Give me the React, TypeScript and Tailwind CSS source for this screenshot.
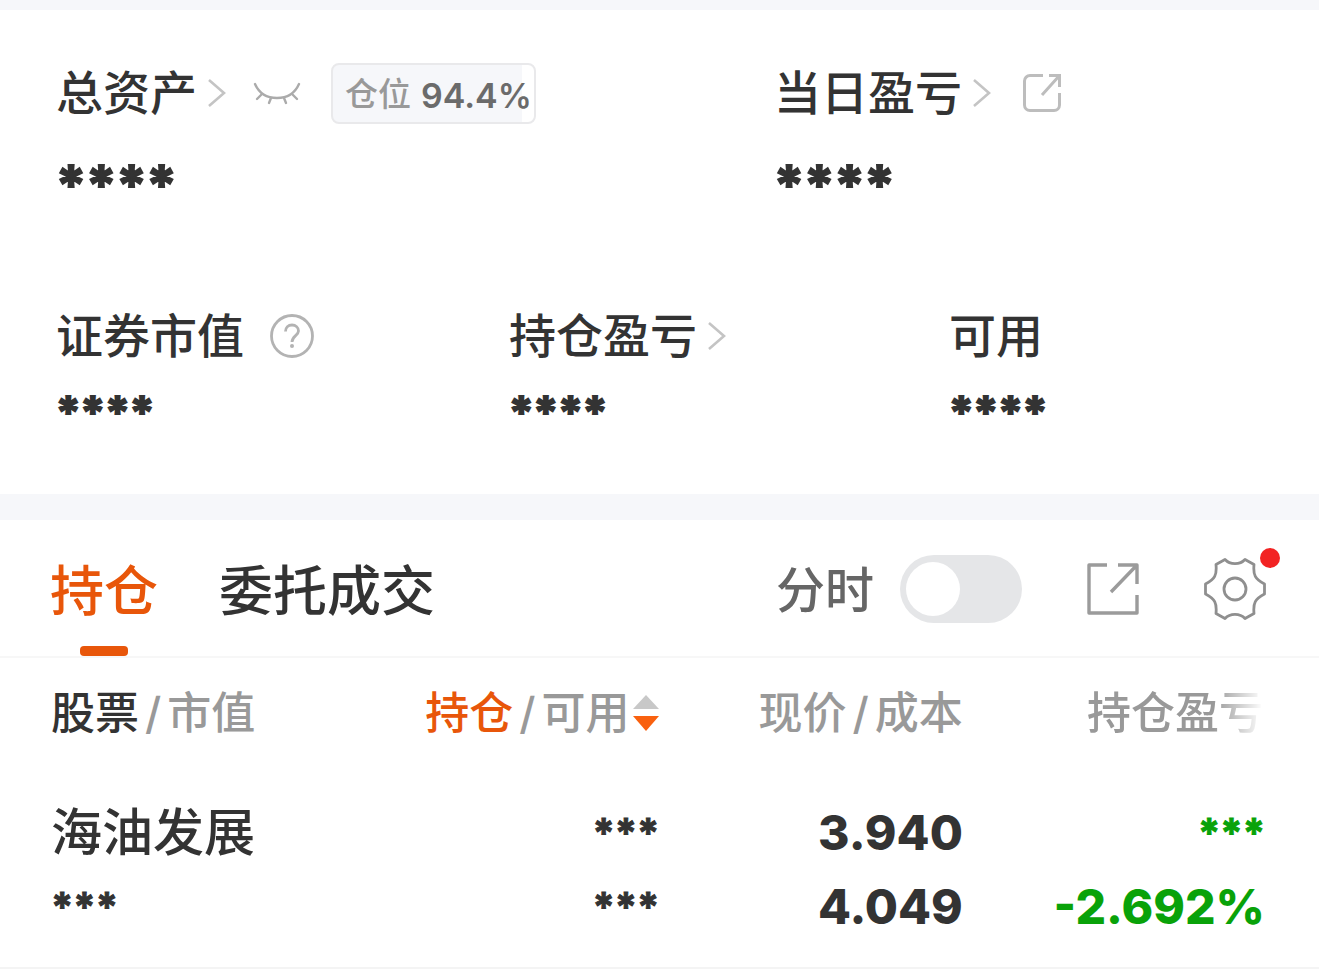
import type { ReactNode } from "react";

const holdings = [
  {
    name: "海油发展",
    marketValue: "***",
    position: "***",
    available: "***",
    price: "3.940",
    cost: "4.049",
    profit: "***",
    profitRate: "-2.692%",
  },
];

function Chevron() {
  return (
    <svg viewBox="0 0 20 32" className="h-8 w-5 shrink-0" fill="none" stroke="#c4c4c4" strokeWidth="2.6">
      <path d="M2 3l15 13L2 29" />
    </svg>
  );
}

function ClosedEye() {
  return (
    <svg viewBox="0 0 48 24" className="h-6 w-12" fill="none" stroke="#ababab" strokeWidth="2.4" strokeLinecap="round">
      <path d="M2 3c4 9 12 14 22 14s18-5 22-14" />
      <path d="M9 13l-5 5M18 17l-2 5M31 17l2 5M39 13l5 5" />
    </svg>
  );
}

function ShareRounded() {
  return (
    <svg viewBox="0 0 40 40" className="size-10" fill="none" stroke="#bdbdbd" strokeWidth="3">
      <path d="M21 2.5H8A5.5 5.5 0 0 0 2.5 8v24A5.5 5.5 0 0 0 8 37.5h24a5.5 5.5 0 0 0 5.5-5.5V20" />
      <path d="M27 2.5h10.5V14M37.5 2.5L20 22" />
    </svg>
  );
}

function ShareSquare() {
  return (
    <svg viewBox="0 0 54 54" className="size-[54px]" fill="none" stroke="#9b9b9b" strokeWidth="3.4" strokeLinejoin="round">
      <path d="M21 3H3v48h48V33" />
      <path d="M32 3h19v19M51 3L25 30" />
    </svg>
  );
}

function HelpIcon() {
  return (
    <svg viewBox="0 0 44 44" className="size-11" fill="none" stroke="#b3b3b3" strokeWidth="2.8">
      <circle cx="22" cy="22" r="20.5" />
      <path d="M15.5 17.5c0-4 2.8-6.5 6.5-6.5s6.5 2.5 6.5 6c0 4.5-6.5 5-6.5 11" />
      <circle cx="22" cy="32" r="2" fill="#b3b3b3" stroke="none" />
    </svg>
  );
}

function GearIcon() {
  return (
    <svg viewBox="0 0 62 62" className="size-[62px]" fill="none" stroke="#8f8f8f" strokeWidth="2.8" strokeLinejoin="round">
      <path d="M21 1.5C26 7 36 7 41 1.5L50 6.5C49 17 51 21 60.5 26V36C51 41 49 45 50 55.5L41 60.5C36 55 26 55 21 60.5L12 55.5C13 45 11 41 1.5 36V26C11 21 13 17 12 6.5Z" />
      <circle cx="31" cy="31" r="11" />
    </svg>
  );
}

function SortIcon() {
  return (
    <svg viewBox="0 0 26 36" className="h-9 w-[26px]">
      <path d="M13 0L26 14H0Z" fill="#c8c8c8" />
      <path d="M13 36L26 21H0Z" fill="#f9610f" />
    </svg>
  );
}

function Slash() {
  return <span className="mx-1.5">/</span>;
}

function Stat({ label, large, children }: { label: string; large?: boolean; children?: ReactNode }) {
  return (
    <div>
      <div className="flex h-16 items-center">
        <span className="whitespace-nowrap text-[47px] leading-16">{label}</span>
        {children}
      </div>
      <p
        className={
          large
            ? "mt-7 text-[54px] leading-16 font-bold [-webkit-text-stroke:2px]"
            : "mt-4 text-[44px] leading-14 font-bold [-webkit-text-stroke:2px]"
        }
      >
        ****
      </p>
    </div>
  );
}

export default function App() {
  return (
    <div className="min-h-screen bg-white font-[Inter,'Noto_Sans_CJK_SC',sans-serif] font-medium text-[#333]">
      <section className="border-t-10 border-[#f6f7fa] px-14 pt-[51px] pb-[54px]">
        <div className="grid grid-cols-[718fr_489fr]">
          <Stat label="总资产" large>
            <button aria-label="总资产详情" className="ml-2.5">
              <Chevron />
            </button>
            <button aria-label="显示金额" className="ml-[26px]">
              <ClosedEye />
            </button>
            <span className="ml-[30px] flex h-[61px] items-center gap-2.5 whitespace-nowrap rounded-lg border-2 border-[#e9e9eb] bg-[linear-gradient(to_right,#f6f7fa_94%,white_94%)] pt-1 pr-0.5 pl-3 text-[33px] text-[#999]">
              仓位 <span className="text-[34px] font-semibold text-[#6b6b6b]">94.4%</span>
            </span>
          </Stat>
          <Stat label="当日盈亏" large>
            <button aria-label="当日盈亏详情" className="ml-2.5">
              <Chevron />
            </button>
            <button aria-label="分享当日盈亏" className="ml-[30px]">
              <ShareRounded />
            </button>
          </Stat>
        </div>
        <div className="mt-[87px] grid grid-cols-[453fr_440fr_314fr]">
          <Stat label="证券市值">
            <button aria-label="证券市值说明" className="ml-[26px]">
              <HelpIcon />
            </button>
          </Stat>
          <Stat label="持仓盈亏">
            <button aria-label="持仓盈亏详情" className="ml-2.5">
              <Chevron />
            </button>
          </Stat>
          <Stat label="可用" />
        </div>
      </section>

      <section className="border-t-26 border-[#f6f7fa]">
        <div className="flex h-[138px] items-start justify-between border-b-2 border-[#f7f7f7] pr-[53px] pl-[50px]">
          <div role="tablist" className="flex h-full gap-[61px]">
            <button role="tab" aria-selected="true" className="relative pt-1.5 text-[54px] text-[#e8560a]">
              持仓
              <span className="absolute bottom-0 left-1/2 h-2.5 w-12 -translate-x-1/2 rounded-sm bg-[#e8560a]" />
            </button>
            <button role="tab" aria-selected="false" className="pt-1.5 text-[54px]">
              委托成交
            </button>
          </div>
          <div className="flex h-full items-center pt-0.5">
            <label htmlFor="intraday" className="pt-1 text-[49px] text-[#666]">
              分时
            </label>
            <input
              id="intraday"
              type="checkbox"
              role="switch"
              className="ml-[26px] flex h-[68px] w-[122px] appearance-none items-center rounded-full bg-[#e5e6e8] px-1.5 before:size-[54px] before:rounded-full before:bg-white"
            />
            <button aria-label="分享持仓" className="ml-16">
              <ShareSquare />
            </button>
            <button aria-label="设置" className="relative ml-16">
              <GearIcon />
              <span className="absolute -top-2.5 -right-3.5 size-5 rounded-full bg-[#f22323]" />
            </button>
          </div>
        </div>

        <table className="w-full table-fixed">
          <thead>
            <tr className="h-[110px] text-right text-[44px] whitespace-nowrap text-[#999]">
              <th scope="col" className="w-[28%] pl-[51px] text-left font-medium">
                <span className="text-[#333]">股票</span>
                <Slash />
                市值
              </th>
              <th scope="col" className="w-[22%] font-medium">
                <button className="inline-flex items-center">
                  <span className="text-[#e8560a]">持仓</span>
                  <Slash />
                  可用
                  <span className="ml-1">
                    <SortIcon />
                  </span>
                </button>
              </th>
              <th scope="col" className="w-[23%] font-medium">
                现价
                <Slash />
                成本
              </th>
              <th scope="col" className="w-[27%] pr-14 font-medium">
                <span className="[mask-image:linear-gradient(to_right,black_72%,transparent)]">持仓盈亏</span>
              </th>
            </tr>
          </thead>
          <tbody>
            {holdings.map((item) => (
              <tr
                key={item.name}
                className="h-[200px] border-b-2 border-[#f4f4f4] text-right text-[48px] leading-[74px] font-extrabold"
              >
                <td className="pt-1 pl-[51px] text-left">
                  <p className="text-[51px] leading-[74px] font-medium whitespace-nowrap">{item.name}</p>
                  <p className="text-[40px] leading-[74px] font-bold [-webkit-text-stroke:1px]">{item.marketValue}</p>
                </td>
                <td className="pt-1 text-[40px] leading-[74px] font-bold [-webkit-text-stroke:1px]">
                  <p>{item.position}</p>
                  <p>{item.available}</p>
                </td>
                <td className="pt-1">
                  <p>{item.price}</p>
                  <p>{item.cost}</p>
                </td>
                <td className="pt-1 pr-[54px] text-[#09a209]">
                  <p className="text-[40px] leading-[74px] font-bold [-webkit-text-stroke:1px]">{item.profit}</p>
                  <p>{item.profitRate}</p>
                </td>
              </tr>
            ))}
          </tbody>
        </table>
      </section>
    </div>
  );
}
